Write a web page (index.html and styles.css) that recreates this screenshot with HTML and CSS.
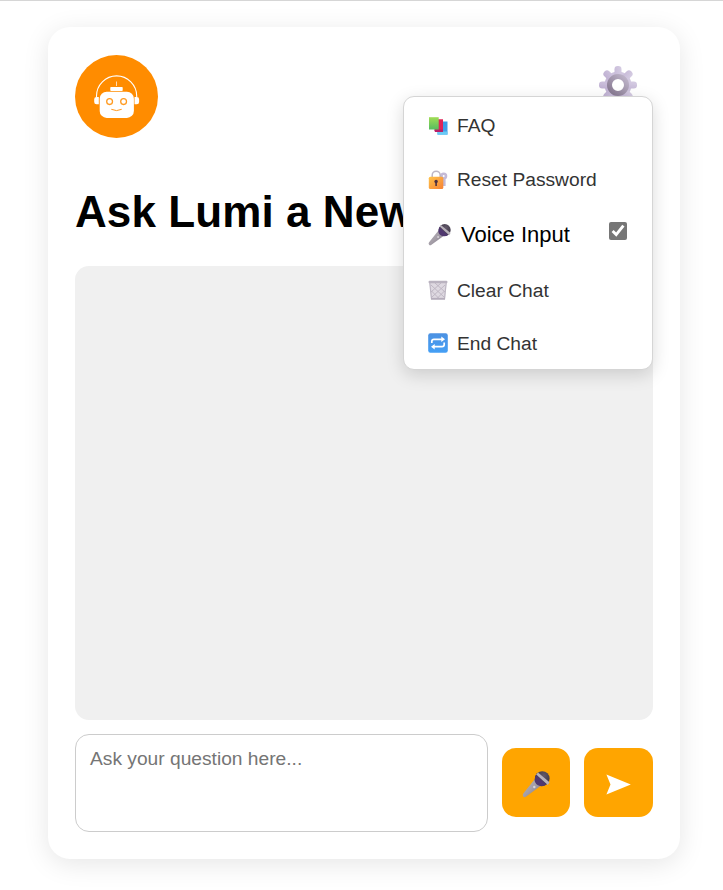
FILE: index.html
```html
<!DOCTYPE html>
<html lang="en">
<head>
<meta charset="utf-8">
<title>Ask Lumi</title>
<link rel="stylesheet" href="styles.css">
</head>
<body>
<svg class="defs" aria-hidden="true">
  <defs>
    <linearGradient id="handle" x1="0" y1="0" x2="1" y2="1"><stop offset="0" stop-color="#b5afb7"/><stop offset=".5" stop-color="#a59fa8"/><stop offset="1" stop-color="#7b7181"/></linearGradient>
    <radialGradient id="head" cx=".6" cy=".3" r=".7"><stop offset="0" stop-color="#62596a"/><stop offset="1" stop-color="#352e3d"/></radialGradient>
    <linearGradient id="gearFill" x1="1" y1="0" x2="0" y2="1"><stop offset="0" stop-color="#d6cde3"/><stop offset="1" stop-color="#bfb0d2"/></linearGradient>
    <linearGradient id="gearRing" x1="1" y1="0" x2="0" y2="1"><stop offset="0" stop-color="#c0b6cb"/><stop offset="1" stop-color="#85778f"/></linearGradient>
    <linearGradient id="lockFill" x1="0" y1="0" x2="1" y2="1"><stop offset="0" stop-color="#ffc34a"/><stop offset="1" stop-color="#f78235"/></linearGradient>
    <linearGradient id="greenBook" x1="0" y1="0" x2="0" y2="1"><stop offset="0" stop-color="#a0dc55"/><stop offset="1" stop-color="#55bd60"/></linearGradient>
    <linearGradient id="blueBook" x1="0" y1="0" x2="0" y2="1"><stop offset="0" stop-color="#389be8"/><stop offset="1" stop-color="#459fe8"/></linearGradient>
    <linearGradient id="blueTile" x1="0" y1="0" x2="0" y2="1"><stop offset="0" stop-color="#4c91e2"/><stop offset="1" stop-color="#449ff5"/></linearGradient>
    <symbol id="mic" viewBox="0 0 28 28">
      <path d="M12.500 9.500 18.500 16 4.200 26.500Q2.500 27.800 1.300 26.500T1.300 23.500Z" fill="url(#handle)"/>
      <circle cx="20.300" cy="8.500" r="7.300" fill="url(#head)"/>
      <path d="M14 5 24.500 14.500Q21.500 16.800 18.300 16Q13 14.800 12.500 10Q12.700 7.200 14 5Z" fill="#50386f"/>
      <path d="M14.200 4.400 16 2.600 27.500 12.300 25.800 15Z" fill="#b9b2bc"/>
      <circle cx="12.300" cy="17" r="1.200" fill="#d8d3da"/>
    </symbol>
  </defs>
</svg>
<main class="card">
  <header class="header">
    <svg class="logo" viewBox="0 0 83 83">
      <circle cx="41.500" cy="41.500" r="41.500" fill="#ff8c00"/>
      <path d="M21.500 42V41A20.100 20.100 0 0 1 61.700 41V42" fill="none" stroke="#fff" stroke-width="1.100"/>
      <path d="M41.500 26.500v4.500" stroke="#fff" stroke-width=".7"/>
      <rect x="35.300" y="32" width="12.400" height="4" rx=".7" fill="#fff"/>
      <path d="M23.800 42v7.300h-2.300q-2.300 0-2.300-2.300v-2.700q0-2.300 2.300-2.300zM59.500 42v7.300h2.300q2.300 0 2.300-2.300v-2.700q0-2.300-2.300-2.300z" fill="#fff"/>
      <rect x="24.700" y="36.700" width="34.200" height="26.200" rx="7" fill="#fff"/>
      <g fill="none" stroke="#ff9a20" stroke-width="1.300"><circle cx="34.600" cy="46.600" r="2.900"/><circle cx="48.600" cy="46.600" r="2.900"/><path d="M36.300 54.300q5.200 2.600 10.400 0" stroke-width="1"/></g>
    </svg>
    <div class="settings">
      <svg class="gear" viewBox="0 0 38 38">
        <g fill="url(#gearFill)"><circle cx="19" cy="19" r="13.500"/>
          <g id="teeth"><rect x="15.500" y="0" width="7" height="38" rx="3.200"/><rect x="0" y="15.500" width="38" height="7" rx="3.200"/></g>
          <use href="#teeth" transform="rotate(45 19 19)"/></g>
        <circle cx="19" cy="19" r="8.500" fill="#fff" stroke="url(#gearRing)" stroke-width="5"/>
      </svg>
      <nav class="menu">
        <div class="item faq"><svg class="icon" viewBox="0 0 20 20"><path d="M9.500 5.500H19.500V18.500H9.500Z" fill="url(#blueBook)"/><path d="M9.500 15.500H19.500v3.300H9.500Z" fill="#6bcaf5"/><path d="M6 3.300h9v12.300H7Z" fill="#df2458"/><path d="M6 13.500h9v2.500H7Z" fill="#b81f68"/><path d="M1 1.200H10.700V13.500H1Z" fill="url(#greenBook)"/></svg><span>FAQ</span></div>
        <div class="item reset"><svg class="icon" viewBox="0 0 20 20"><g fill="none" stroke="#c4bad6" stroke-width="2.600"><circle cx="15.700" cy="6" r="2.300"/><path d="M16.300 8v8"/></g><path d="M4.200 8V5.200a4 4 0 0 1 8 0V8" fill="none" stroke="#bdb6c4" stroke-width="1.500"/><rect x=".8" y="6.700" width="14.500" height="12.300" rx="1.500" fill="url(#lockFill)"/><circle cx="8.100" cy="11.500" r="1.700" fill="#4d3040"/><path d="M7.300 12h1.600v4H7.300z" fill="#4d3040"/></svg><span>Reset Password</span></div>
        <label class="item voice"><svg class="voice-icon"><use href="#mic"/></svg><span>Voice Input</span><input class="check" type="checkbox" checked></label>
        <div class="item clear"><svg class="icon" viewBox="0 0 20 20"><path d="M1.500 2h17L17 19.300H3Z" fill="#ded9e1"/><path d="M3 5l13 12M7 3l10 9M3.500 11l8 8M17 5 4 17M13 3 3 12M16.500 11l-8 8" stroke="#bbb3c0" stroke-width=".9" fill="none"/><path d="M1.800 3 3.500 18.800h13L18.200 3" fill="none" stroke="#bdb6c3" stroke-width="1.200"/><rect x=".5" y=".8" width="19" height="2.400" rx="1.200" fill="#bab3c0"/><path d="M3 18.700h14" stroke="#b5adbb" stroke-width="1.700"/></svg><span>Clear Chat</span></div>
        <div class="item end"><svg class="icon" viewBox="0 0 20 20"><rect x=".2" y=".2" width="19.600" height="19.600" rx="2.200" fill="url(#blueTile)"/><path d="M3.800 10V8.500q0-2.200 2.200-2.200h8M16.200 9.500v2q0 2.200-2.200 2.200H6" fill="none" stroke="#fff" stroke-width="1.700"/><path d="M13.300 3.600 17 6.300 13.300 9ZM6.700 11 3 13.700 6.700 16.400Z" fill="#fff"/></svg><span>End Chat</span></div>
      </nav>
    </div>
  </header>
  <h1 class="title">Ask Lumi a New</h1>
  <section class="chat"></section>
  <form class="composer">
    <textarea class="question" placeholder="Ask your question here..."></textarea>
    <button class="action" type="button" aria-label="Voice"><svg class="mic-icon"><use href="#mic"/></svg></button>
    <button class="action send" type="button" aria-label="Send"><svg class="send-icon" viewBox="0 0 25 21"><path d="M.4.400 24.800 10.500.400 20.600 4.500 10.500Z" fill="#fff"/></svg></button>
  </form>
</main>
</body>
</html>
```

FILE: styles.css
```css
* { box-sizing: border-box; }
body {
  margin: 0;
  height: 890px;
  padding: 26px 43px 0 48px;
  border-top: 1px solid #d6d6d6;
  background: #fff;
  font-family: "Liberation Sans", Arial, sans-serif;
  overflow: hidden;
}
.defs { position: absolute; width: 0; height: 0; }
.card {
  width: 632px;
  height: 832px;
  padding: 28px 27px 27px;
  border-radius: 22px;
  box-shadow: 0 5px 27px rgba(0, 0, 0, .1);
  display: flex;
  flex-direction: column;
}
.header { display: flex; justify-content: space-between; height: 83px; }
.logo { width: 83px; height: 83px; }
.settings { position: relative; padding: 11px 16px 0 0; }
.gear { display: block; width: 38px; height: 38px; }
.menu {
  position: absolute;
  top: 41px;
  right: 0;
  width: 250px;
  height: 274px;
  padding: 2px 24px 0;
  border: 1px solid #d5d5d5;
  border-radius: 11px;
  background: #fff;
  box-shadow: 0 5px 17px rgba(0, 0, 0, .15);
  color: #333;
  font-size: 19.2px;
}
.item { display: flex; align-items: center; height: 54px; white-space: nowrap; }
.icon { width: 20px; height: 20px; margin: 0 9px 1px 0; }
.voice { height: 56px; color: #000; font-size: 22px; }
.voice-icon { width: 23px; height: 23px; margin: 0 10px 2px 0; }
.check { width: 18px; height: 18px; margin: 0 1px 8px auto; accent-color: #767676; }
.clear { height: 55px; }
.end { height: 51px; }
.title {
  margin: 46px 0 0;
  height: 82px;
  font-size: 44px;
  line-height: 56px;
  letter-spacing: .08px;
  white-space: nowrap;
}
.chat { height: 454px; background: #f0f0f0; border-radius: 14px; }
.composer { display: flex; align-items: center; gap: 14px; margin-top: 14px; }
.question {
  width: 413px;
  height: 98px;
  padding: 13px 14px;
  border: 1px solid #ccc;
  border-radius: 14px;
  resize: none;
  font: 19.2px "Liberation Sans", Arial, sans-serif;
}
.question::placeholder { color: #757575; }
.action {
  width: 68px;
  height: 69px;
  margin-bottom: 1px;
  padding: 0;
  border: 0;
  border-radius: 14px;
  background: #ffa500;
  display: flex;
  align-items: center;
  justify-content: center;
}
.send { width: 69px; }
.mic-icon { width: 28px; height: 28px; margin-top: 2px; }
.send-icon { width: 25px; height: 21px; margin-top: 3px; }
```
